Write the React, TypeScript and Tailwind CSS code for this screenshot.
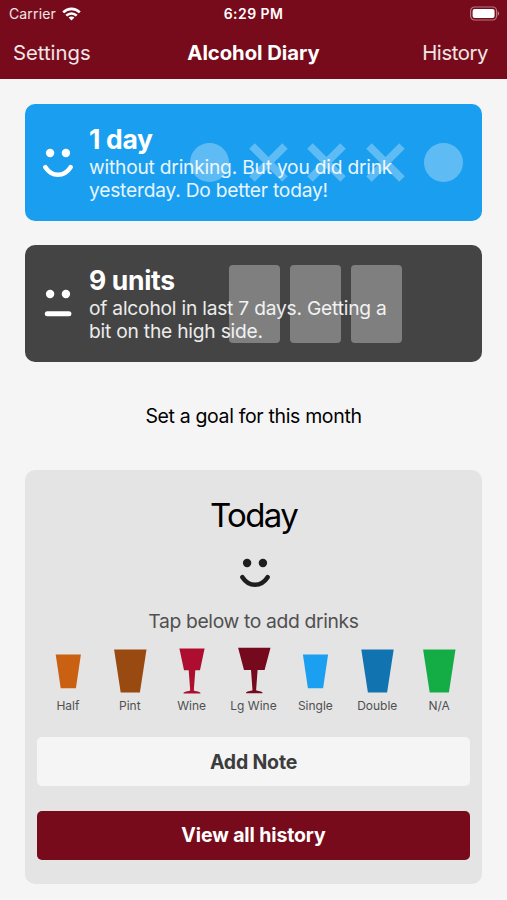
import React from 'react';

type FaceProps = {
  mood: 'happy' | 'neutral';
  className?: string;
};

const Face = ({ mood, className }: FaceProps) => (
  <svg viewBox="0 0 30 30" className={`h-[30px] w-[30px] ${className ?? ''}`} fill="none" stroke="currentColor">
    <circle cx="7.1" cy="5" r="4.2" fill="currentColor" stroke="none" />
    <circle cx="22.9" cy="5" r="4.2" fill="currentColor" stroke="none" />
    {mood === 'happy' ? (
      <path d="M2.4 19.2C9 29.3 21 29.3 27.6 19.2" strokeWidth="4.5" strokeLinecap="round" />
    ) : (
      <path d="M4.3 24.7H25.9" strokeWidth="5" strokeLinecap="round" />
    )}
  </svg>
);

type Drink = {
  label: string;
  color: string;
  path: string;
};

// Every glass is drawn in the same 34x48 box
const drinks: Drink[] = [
  { label: 'Half', color: '#c96012', path: 'M4.7 7.6H29.9L24.9 41.2H9.7Z' },
  { label: 'Pint', color: '#984a10', path: 'M1.1 2.6H33.5L26.9 45.5H7.7Z' },
  {
    label: 'Wine',
    color: '#ad0e2f',
    path: 'M4.4 1.6H29.6L25 23.3H20.3L18.8 43.6C20 44.2 25.6 44.4 25.6 46.6H8.4C8.4 44.4 14 44.2 15.2 43.6L13.7 23.3H9Z',
  },
  {
    label: 'Lg Wine',
    color: '#740a1c',
    path: 'M1.1 0.8H33.5L27.6 23H20.6L19.1 43.2C20.3 43.8 25.7 44 25.7 46.2H8.9C8.9 44 14.3 43.8 15.5 43.2L14 23H7Z',
  },
  { label: 'Single', color: '#1b9ff1', path: 'M4.9 7.6H30.1L25.1 41.2H9.9Z' },
  { label: 'Double', color: '#1173b0', path: 'M1.3 2.6H33.7L27.1 45.5H7.9Z' },
  { label: 'N/A', color: '#14ad45', path: 'M1.1 2.6H33.5L26.9 45.5H7.7Z' },
];

// Recent days, true means no drinking
const days = [true, false, false, false, true];

const StatusBar = () => (
  <div className="grid h-[27px] grid-cols-3 items-center px-2 text-[14px]">
    <div className="flex items-center gap-[6px] pl-px">
      <span className="tracking-[0.01em] text-white/90">Carrier</span>
      <svg viewBox="0 0 19 14" className="h-[14px] w-[19px]" fill="none" stroke="white" strokeWidth="2.6">
        <path d="M1.2 5.4C6 0.7 13 0.7 17.8 5.4" />
        <path d="M4.3 8.6C7.2 5.7 11.8 5.7 14.7 8.6" />
        <path d="M9.5 13.6L6.6 10.6C8.2 9.1 10.8 9.1 12.4 10.6Z" fill="white" stroke="none" />
      </svg>
    </div>
    <span className="text-center font-semibold tracking-[0.03em]">6:29 PM</span>
    <svg viewBox="0 0 31 15" className="-mr-px h-[15px] w-[31px] justify-self-end">
      <rect x="1.6" y="1" width="26" height="13" rx="4" fill="none" stroke="white" strokeOpacity="0.45" strokeWidth="1.2" />
      <rect x="3.6" y="3" width="22" height="9" rx="2" fill="white" />
      <path d="M28.8 5.5C30.5 6 30.5 9 28.8 9.5Z" fill="white" fillOpacity="0.5" />
    </svg>
  </div>
);

type SummaryProps = {
  mood: 'happy' | 'neutral';
  title: string;
  lines: string[];
};

const Summary = ({ mood, title, lines }: SummaryProps) => (
  <div className="relative flex h-full items-center pl-[18px]">
    <Face mood={mood} className="mt-px" />
    <div className="ml-4 pt-px">
      <h2 className="mb-[2px] text-[26.5px] font-bold leading-[30px] tracking-[-0.012em]">{title}</h2>
      {lines.map((line) => (
        <p key={line} className="whitespace-nowrap text-[19.2px] leading-[23px] tracking-[-0.011em] text-white/90">
          {line}
        </p>
      ))}
    </div>
  </div>
);

const App = () => {
  return (
    <div className="h-[900px] w-[507px] overflow-hidden bg-[#f5f5f5] font-['Inter',sans-serif] text-black">
      <header className="h-[79px] bg-[#780b1b] text-white">
        <StatusBar />
        <nav className="grid h-[52px] grid-cols-[1fr_auto_1fr] items-center pt-px text-[20.3px]">
          <button className="justify-self-start pl-[13px] text-white/90">Settings</button>
          <h1 className="font-bold tracking-[-0.003em]">Alcohol Diary</h1>
          <button className="justify-self-end pr-[19px] tracking-[-0.02em] text-white/90">History</button>
        </nav>
      </header>

      <main className="flex flex-col px-[25px] pt-[25px]">
        {/* Days without drinking */}
        <section className="relative h-[117px] rounded-[10px] bg-[#1a9eef] text-white">
          <div className="absolute inset-y-0 right-[19px] flex items-center gap-[19.5px] text-white opacity-30">
            {days.map((sober, i) => (
              <svg key={i} viewBox="0 0 39 39" className="h-[39px] w-[39px]">
                {sober ? (
                  <circle cx="19.5" cy="19.5" r="19.5" fill="currentColor" />
                ) : (
                  <path d="M3 3L36 36M36 3L3 36" stroke="currentColor" strokeWidth="7.8" />
                )}
              </svg>
            ))}
          </div>
          <Summary mood="happy" title="1 day" lines={['without drinking. But you did drink', 'yesterday. Do better today!']} />
        </section>

        {/* Units this week */}
        <section className="relative mt-6 h-[117px] rounded-[10px] bg-[#444] text-white">
          <div className="absolute inset-y-0 right-[80px] flex items-center gap-[9.5px]">
            <div className="h-[78px] w-[51.5px] rounded bg-[#7f7f7f]" />
            <div className="h-[78px] w-[51.5px] rounded bg-[#7f7f7f]" />
            <div className="h-[78px] w-[51.5px] rounded bg-[#7f7f7f]" />
          </div>
          <Summary mood="neutral" title="9 units" lines={['of alcohol in last 7 days. Getting a', 'bit on the high side.']} />
        </section>

        <button className="flex h-[108px] items-center justify-center pt-[2px] text-[19.5px] tracking-[-0.018em]">
          Set a goal for this month
        </button>

        {/* Today */}
        <section className="flex h-[414px] flex-col items-center rounded-[10px] bg-[#e4e4e4] px-3">
          <h2 className="mt-6 text-[33px] leading-[42px] tracking-[-0.05em]">Today</h2>
          <Face mood="happy" className="ml-[2px] mt-[22px] text-[#1e1e1e]" />
          <p className="mt-[21px] text-[19.3px] leading-[24px] tracking-[-0.018em] text-[#505050]">Tap below to add drinks</p>

          <div className="mt-[14px] flex w-full">
            {drinks.map((drink) => (
              <button key={drink.label} className="flex flex-1 basis-0 flex-col items-center">
                <svg viewBox="0 0 34 48" className="h-[48px] w-[34px]">
                  <path d={drink.path} fill={drink.color} />
                </svg>
                <span className="mt-[3px] whitespace-nowrap text-[12px] leading-[16px] text-[#505050]">{drink.label}</span>
              </button>
            ))}
          </div>

          <button className="mt-[23px] h-[49px] w-full shrink-0 rounded-[5px] bg-[#f5f5f5] pt-[2px] text-[19.5px] font-bold tracking-[-0.01em] text-[#3c3c3c]">
            Add Note
          </button>
          <button className="mt-[25px] h-[49px] w-full shrink-0 rounded-[5px] bg-[#780b1b] text-[19.5px] font-bold tracking-[-0.006em] text-white">
            View all history
          </button>
        </section>
      </main>
    </div>
  );
};

export default App;
